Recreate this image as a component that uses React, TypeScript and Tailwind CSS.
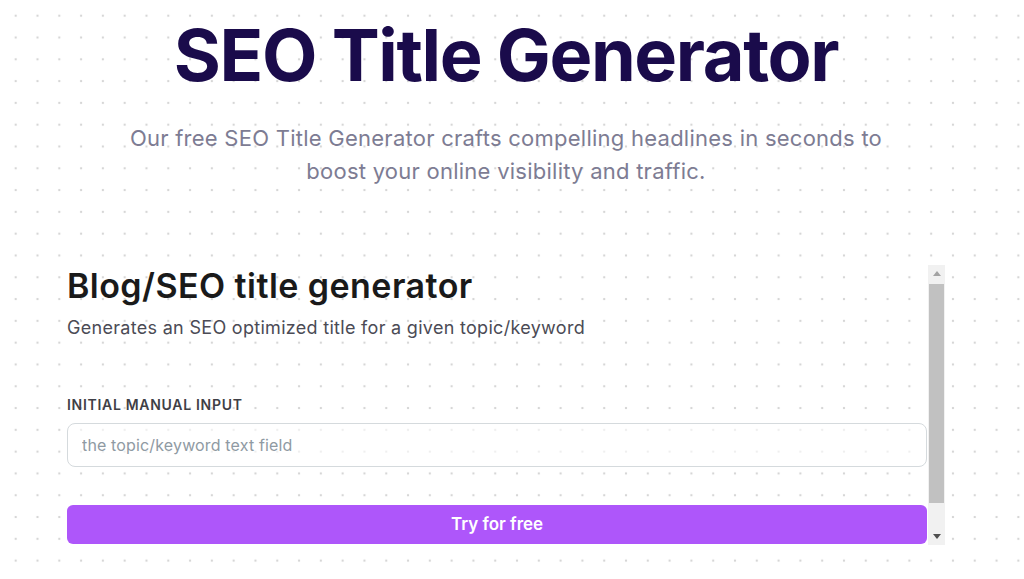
export default function App() {
  return (
    <div
      className="h-[579px] w-full overflow-hidden bg-white bg-[radial-gradient(circle,#d6d6d6_1px,transparent_1.6px)] bg-[length:21.8px_21.8px] bg-[position:4.8px_4.8px]"
      style={{ fontFamily: "Inter, 'Noto Sans', sans-serif" }}
    >
      <div className="w-[1012px] flex flex-col items-center">
        {/* Hero */}
        <h1 className="pt-[19px] text-center text-[72px] font-bold leading-none tracking-[-1.4px] text-[#1a0b4b]">
          SEO Title Generator
        </h1>
        <p className="mt-[31px] text-center text-[22px] leading-[33px] tracking-[0.25px] text-[#7d7c93]">
          Our free SEO Title Generator crafts compelling headlines in seconds to
          <br />
          boost your online visibility and traffic.
        </p>

        {/* Embedded tool */}
        <div className="mt-[77px] flex h-[280px] w-[878px]">
          <div className="flex w-[861px] flex-col">
            <h2 className="pt-[1px] text-[34px] font-semibold leading-[40px] tracking-[0.45px] text-[#1a1a1a]">
              Blog/SEO title generator
            </h2>
            <p className="mt-[10px] text-[18px] leading-[24px] tracking-[0.3px] text-[#4b4b55]">
              Generates an SEO optimized title for a given topic/keyword
            </p>

            <label className="mt-[55px] text-[14px] font-semibold uppercase leading-[20px] tracking-[0.05em] text-[#3f3f46]">
              Initial manual input
            </label>
            <input
              className="mt-[8px] h-[44px] w-[860px] rounded-lg border border-[#d5dadd] bg-white/60 px-[14px] text-[16px] tracking-[0.15px] text-[#333] placeholder:text-[#8f9aa3] outline-none"
              placeholder="the topic/keyword text field"
            />

            <button className="mt-[38px] h-[39px] w-[860px] rounded-md bg-[#ae56fa] text-[17px] font-semibold text-white">
              Try for free
            </button>
          </div>

          {/* Scrollbar */}
          <div className="flex w-[17px] flex-col bg-[#f1f1f1]">
            <div className="flex h-[17px] items-center justify-center">
              <svg width="8" height="5" viewBox="0 0 8 5">
                <path d="M4 0 L8 5 L0 5 Z" fill="#a3a3a3" />
              </svg>
            </div>
            <div className="mx-px mt-[2px] h-[219px] bg-[#c1c1c1]" />
            <div className="flex-1" />
            <div className="flex h-[17px] items-center justify-center">
              <svg width="8" height="5" viewBox="0 0 8 5">
                <path d="M0 0 L8 0 L4 5 Z" fill="#505050" />
              </svg>
            </div>
          </div>
        </div>
      </div>
    </div>
  );
}
